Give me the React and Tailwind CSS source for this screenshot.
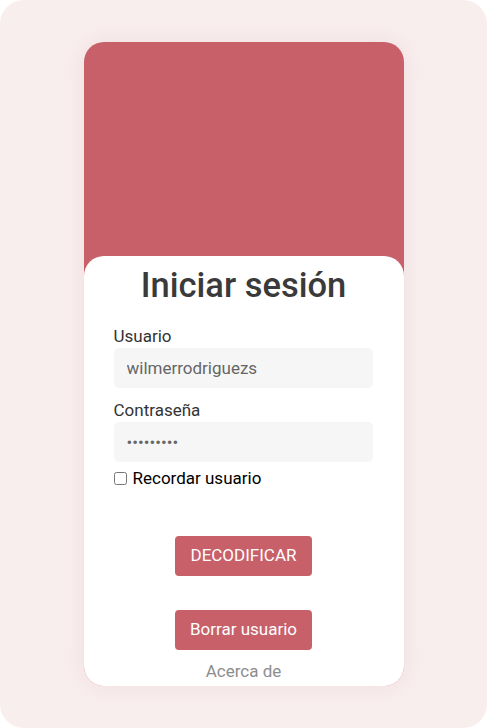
import React from "react";

export default function App() {
    return (
        <div className="w-[487px] h-[728px] bg-white" style={{ fontFamily: "Roboto, 'Liberation Sans', sans-serif" }}>
            <div className="w-full h-full rounded-[24px] bg-[#f9eeee] pt-[42px] flex justify-center">
                {/* Login card */}
                <div className="w-[320px] h-[644px] rounded-[20px] bg-[#c8606a] overflow-hidden flex flex-col shadow-[0_0_24px_rgba(200,150,150,0.18)]">
                    <div className="h-[214px] shrink-0" />
                    <div className="flex-1 bg-white rounded-t-[20px] flex flex-col">
                        <h1 className="text-center text-[34.5px] leading-[42px] font-medium text-[#3a3a3a] mt-[8px]">Iniciar sesión</h1>

                        <div className="px-[30px] mt-[20px] flex flex-col">
                            <label className="text-[17px] leading-[20px] text-[#333]">Usuario</label>
                            <input
                                type="text"
                                defaultValue="wilmerrodriguezs"
                                className="mt-[2px] h-[40px] w-[259px] rounded-[5px] bg-[#f6f6f6] px-[13px] text-[17px] text-[#666] outline-none"
                            />

                            <label className="mt-[12px] text-[17px] leading-[20px] text-[#333]">Contraseña</label>
                            <input
                                type="password"
                                defaultValue="123456789"
                                className="mt-[2px] h-[40px] w-[259px] rounded-[5px] bg-[#f6f6f6] px-[13px] text-[17px] text-[#666] outline-none"
                            />

                            <label className="mt-[6px] flex items-center gap-[6px] text-[17px] leading-[20px] text-black">
                                <input type="checkbox" className="w-[13px] h-[13px] m-0" />
                                Recordar usuario
                            </label>
                        </div>

                        <div className="flex flex-col items-center mt-[48px]">
                            <button className="h-[40px] px-[15px] rounded-[4px] bg-[#c8606a] text-white text-[17px]">DECODIFICAR</button>
                            <button className="mt-[34px] h-[40px] px-[15px] rounded-[4px] bg-[#c8606a] text-white text-[17px]">Borrar usuario</button>
                            <span className="mt-[11px] text-[17px] leading-[20px] text-[#8d8d8d]">Acerca de</span>
                        </div>
                    </div>
                </div>
            </div>
        </div>
    );
}
